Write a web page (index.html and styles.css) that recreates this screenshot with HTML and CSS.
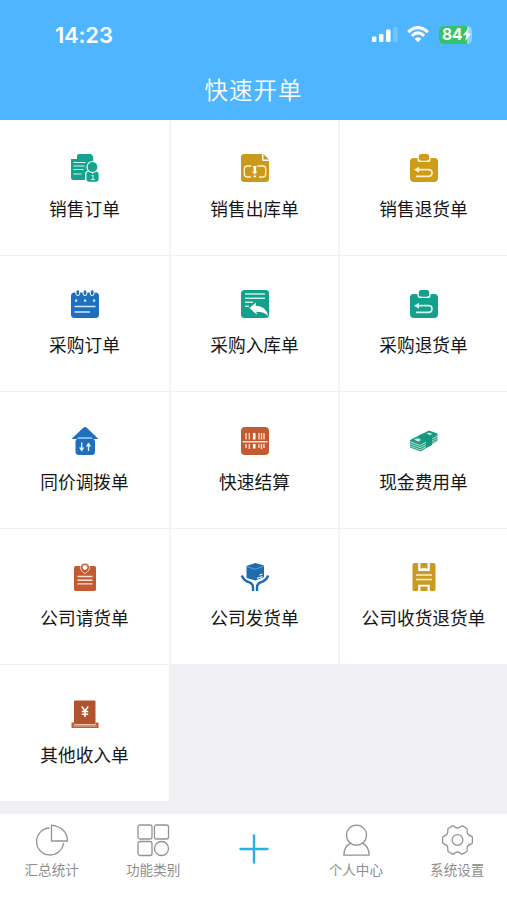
FILE: index.html
```html
<!DOCTYPE html>
<html lang="zh-CN">
<head>
<meta charset="utf-8">
<title>快速开单</title>
<link rel="stylesheet" href="styles.css">
</head>
<body>
<div class="app">
  <header class="header">
    <div class="status">
      <span class="time">14:23</span>
      <div class="status-icons">
        <svg class="signal" width="26" height="16" viewBox="0 0 26 16" fill="#fff"><rect x="0" y="9.5" width="4.4" height="5.500" rx="1.2"/><rect x="7" y="7" width="4.4" height="8" rx="1.2"/><rect x="14" y="2.5" width="4.6" height="12.500" rx="1.2"/><rect x="21.2" y="0" width="4.4" height="15" rx="1.2" opacity=".2"/></svg>
        <svg class="wifi" width="22" height="17" viewBox="0 0 22 17" fill="none" stroke="#fff" stroke-width="3"><path d="M1.2 6.2Q11-3 20.8 6.2"/><path d="M4.9 9.8Q11 4 17.1 9.8"/><path d="M7.6 12.7Q11 9.6 14.4 12.7L11 16.2Z" fill="#fff" stroke="none"/></svg>
        <div class="battery"><span>84</span><svg width="8" height="13" viewBox="0 0 8 13" fill="#fff"><path d="M5.7 0L0 7.300h3.300L2.300 13 8 5.400H4.600z"/></svg></div>
      </div>
    </div>
    <h1 class="title">快速开单</h1>
  </header>

  <main class="grid">
    <a class="cell">
      <svg class="icon" viewBox="0 0 28 28"><path fill="#15a38d" d="M8 0h12l2.200 2.500V21H14v5H2.500Q0 26 0 23.500V5h6V2Q6 0 8 0z"/><path stroke="#d9f5ef" stroke-width="1" d="M2.500 8.500h12M2.500 12h11M2.500 15.500h10M2.500 20h8"/><g fill="#15a38d" stroke="#fff" stroke-width="1.200"><rect x="14.800" y="17" width="13.400" height="11.300" rx="3"/><circle cx="21.500" cy="13" r="5.500"/></g><path fill="none" stroke="#b5e8dd" stroke-width="1.200" d="M20.500 21.500h1.500v4M20 25.500h4M21 19.500h1"/></svg>
      <span>销售订单</span>
    </a>
    <a class="cell">
      <svg class="icon" viewBox="0 0 28 28"><path fill="#c99a1c" d="M3 0h18v5.500Q21 7 22.500 7H28v18q0 3-3 3H3q-3 0-3-3V3q0-3 3-3zM22.500 0L28 5.500h-5.500z"/><path fill="none" stroke="#fff4c9" stroke-width="1.300" d="M10.500 12H6.500Q3.300 12 3.300 15v5q0 3 3.200 3h3.500M16.500 12h5q3.200 0 3.200 3v5q0 3-3.200 3h-3.500"/><path fill="#fff" d="M12 12h3.500l-.7 5.500h1.700l-2.800 3-2.700-3H13zM12.600 21.500H15v1.800h-2.400z"/></svg>
      <span>销售出库单</span>
    </a>
    <a class="cell">
      <svg class="icon" viewBox="0 0 28 28"><path fill="#cf9b18" d="M3.500 4h4v1.500Q7.500 8 10 8h8q2.500 0 2.500-2.500V4h4Q28 4 28 7.500V24q0 4-4 4H4q-4 0-4-4V7.500Q0 4 3.500 4z"/><rect x="8.800" y="0" width="10.400" height="6.700" rx="2.500" fill="#cf9b18"/><path fill="none" stroke="#fff1c8" stroke-width="1.700" d="M7 15.700h11.500q3.500 0 3.500 3.300t-3.500 3.300H6"/><path fill="#fff1c8" d="M4 15.700l5-3v6z"/></svg>
      <span>销售退货单</span>
    </a>

    <a class="cell">
      <svg class="icon" viewBox="0 0 28 28"><rect y="2.500" width="28" height="25.500" rx="3.500" fill="#1e70bf"/><g fill="#1e70bf" stroke="#fff" stroke-width="1"><rect x="5" y="-.2" width="3.600" height="5.800" rx="1.800"/><rect x="12.200" y="-.2" width="3.600" height="5.800" rx="1.800"/><rect x="19.400" y="-.2" width="3.600" height="5.800" rx="1.800"/></g><g fill="#d9ecff"><rect x="4" y="9.500" width="2.200" height="2.200"/><rect x="13" y="9.500" width="2.200" height="2.200"/><rect x="22" y="9.500" width="2.200" height="2.200"/></g><path stroke="#cfe6ff" stroke-width="1.500" d="M3.500 16.500h21M3.500 22h15.500"/></svg>
      <span>采购订单</span>
    </a>
    <a class="cell">
      <svg class="icon" viewBox="0 0 28 28"><rect width="28" height="28" rx="3.500" fill="#14a18b"/><path stroke="#c5eee4" stroke-width="1.500" d="M4 4h20M4 8.200h20M4 12.300h8M4 16.300h4"/><path fill="#fff" d="M8.500 18l6.500-5.500-.3 3.200q10.500.3 12.300 10.300-4-4.500-11.800-4.200l.8 3z"/></svg>
      <span>采购入库单</span>
    </a>
    <a class="cell">
      <svg class="icon" viewBox="0 0 28 28"><path fill="#14a18b" d="M3.500 4h4v1.500Q7.500 8 10 8h8q2.500 0 2.500-2.500V4h4Q28 4 28 7.500V24q0 4-4 4H4q-4 0-4-4V7.500Q0 4 3.500 4z"/><rect x="8.800" y="0" width="10.400" height="6.700" rx="2.500" fill="#14a18b"/><path fill="none" stroke="#d2f4ec" stroke-width="1.700" d="M7 15.700h11.500q3.500 0 3.500 3.300t-3.500 3.300H6"/><path fill="#d2f4ec" d="M4 15.700l5-3v6z"/></svg>
      <span>采购退货单</span>
    </a>

    <a class="cell">
      <svg class="icon" viewBox="0 0 28 28"><path fill="#1e70bf" d="M14 0q1 0 2 .9L27.500 12H22l-1.500-1.500h-13L6 12H.5L12 .9Q13 0 14 0z"/><rect x="4.500" y="11.500" width="19.500" height="16.500" rx="3.500" fill="#1e70bf"/><path fill="none" stroke="#e0f0ff" stroke-width="1.300" d="M10.700 15.500v8M17.500 24v-8"/><path fill="#e0f0ff" d="M8 20.500h5.400l-2.700 4zM14.800 19.500l2.700-4 2.700 4z"/></svg>
      <span>同价调拨单</span>
    </a>
    <a class="cell">
      <svg class="icon" viewBox="0 0 28 28"><rect width="28" height="28" rx="4" fill="#c25b32"/><path stroke="#ffe3d6" stroke-width="1.300" d="M5 6v6.500M8.300 6v6.500M18 6v6.500M20.500 6v6.500M23 6v6.500M5 17v4M8.300 17v5M18 17v4M20.500 17v5M23 17v4"/><path stroke="#fff" stroke-width="2.600" d="M13.200 6v6.500M13.200 17v4.500"/><path stroke="#ffdfcf" stroke-width="1.500" d="M1.500 14.800h25"/></svg>
      <span>快速结算</span>
    </a>
    <a class="cell">
      <svg class="icon" viewBox="0 0 28 28"><path fill="#1c9b82" d="M0 13L19 3.500l8.500 3v7.500L10.500 24.500 0 20.500z"/><path fill="none" stroke="#d5f1ea" stroke-width=".8" d="M0 14.500l10 4 17.500-9.500M0 16.700l10 4 17.500-9.500M0 18.900l10 4 17.500-9.500"/><path fill="#14977d" d="M7.500 9.500L13 6.500l9 4v7.500l-6 3v-7z"/><path fill="#d5f1ea" d="M4.500 12.800q1.500-1.800 4-1.300t1.500 2.300-5.500-1zM16.500 6.500q2.500-1.300 4.500-.2t-1 1.700z"/></svg>
      <span>现金费用单</span>
    </a>

    <a class="cell">
      <svg class="icon" viewBox="0 0 28 28"><rect x="3" y="3" width="22" height="25" rx="1.800" fill="#c25b32"/><path fill="#c25b32" stroke="#ffe8dd" stroke-width=".8" d="M14 .2a4.700 4.700 0 0 1 4.700 4.700Q18.500 8 14 10.800 9.500 8 9.300 4.900A4.700 4.700 0 0 1 14 .2z"/><circle cx="14" cy="4.500" r="2.400" fill="#fff"/><path stroke="#ffe1d3" stroke-width="1.400" d="M6.500 13.500h15M6.500 17.200h15M6.500 20.900h15"/></svg>
      <span>公司请货单</span>
    </a>
    <a class="cell">
      <svg class="icon" viewBox="0 0 28 28"><path fill="#1e6bb0" d="M5.500 3l9-3L23 2.500V14l-8.500 3.500L5.500 15z"/><path fill="none" stroke="#81b5e5" stroke-width=".7" d="M5.500 3.700l9 2.500L23 3"/><path stroke="#e0f1ff" stroke-width="1.300" d="M18.500 12.200l3-1.200M16 15.300l5.500-1.800"/><path fill="none" stroke="#1e6bb0" stroke-width="2.400" d="M.8 12.500Q3 18 8.500 19.300q3.500 1.500 3.500 5V28M27.200 12.500Q25 18 19.500 19.300q-3.500 1.500-3.500 5V28"/></svg>
      <span>公司发货单</span>
    </a>
    <a class="cell">
      <svg class="icon" viewBox="0 0 28 28"><path fill="#c99a24" d="M2.500 1.500Q2.500 0 4 0h4.500v8.500h11V0H24q1.500 0 1.500 1.500v25Q25.500 28 24 28h-4.500v-6.500h-11V28H4q-1.500 0-1.500-1.500zM7.500 8h13v14h-13zM10.500 0h7v5.500H16l-2-.8-2 .8h-1.500zM10.500 23.500h7V28h-7z"/><path fill="none" stroke="#fff" stroke-width="1.400" d="M9 0v7l3 .2 2-.9 2 .9 3-.2V0M9 28v-5.500h10V28"/><path stroke="#fff1cc" stroke-width="1.300" d="M6 12h16M6 16.500h16"/></svg>
      <span>公司收货退货单</span>
    </a>

    <a class="cell last">
      <svg class="icon" viewBox="0 0 28 28"><rect x="3" y=".5" width="21.500" height="23.500" rx="1" fill="#b3532e"/><path fill="#c25b32" d="M.5 22.500h3v1.700h21v-1.700h3V28H.5z"/><path stroke="#f6d8ca" stroke-width=".8" d="M3.500 24.500h21M2.500 26h23"/><path fill="none" stroke="#fff" stroke-width="1.500" d="M10.800 6.500l3.200 4.500 3.200-4.500M14 11v6M10.800 11.500h6.400M10.800 14.200h6.400"/></svg>
      <span>其他收入单</span>
    </a>
  </main>

  <nav class="tabs">
    <a class="tab">
      <svg class="tab-icon" viewBox="0 0 32 32"><path d="M13.500 4A13.500 13.500 0 1 0 27.500 19M15.500 1.200V17h16Q31 3.500 15.500 1.200z"/></svg>
      <span>汇总统计</span>
    </a>
    <a class="tab">
      <svg class="tab-icon" viewBox="0 0 32 32"><rect x="1" y="1" width="14" height="14" rx="2"/><rect x="17.500" y="1" width="14" height="14" rx="2"/><rect x="1" y="17.500" width="14" height="14" rx="2"/><circle cx="24.500" cy="24.500" r="7"/></svg>
      <span>功能类别</span>
    </a>
    <a class="tab add">
      <svg width="30" height="30" viewBox="0 0 30 30"><path d="M15 1.500v27M1.500 15h27"/></svg>
    </a>
    <a class="tab">
      <svg class="tab-icon" viewBox="0 0 32 32"><circle cx="16.500" cy="11.200" r="10"/><path d="M10.500 19.200Q4 22.500 3.800 31.200h25.400Q29 22.500 22.500 19.200"/></svg>
      <span>个人中心</span>
    </a>
    <a class="tab">
      <svg class="tab-icon" viewBox="0 0 32 32"><path d="M11.500 1.900Q12.500 1.600 13.200 2.500Q16.500 5.500 19.800 2.500Q20.500 1.600 21.500 1.900L25.500 4.200Q26.500 5 26.200 6Q25.500 10.800 30 12Q31.200 12.200 31.400 13.500V18.500Q31.200 19.800 30 20Q25.500 21.200 26.200 26Q26.500 27 25.500 27.800L21.500 30.100Q20.500 30.400 19.800 29.500Q16.500 26.500 13.200 29.500Q12.500 30.400 11.500 30.100L7.500 27.800Q6.500 27 6.800 26Q7.500 21.200 3 20Q1.800 19.800 1.600 18.500V13.500Q1.800 12.200 3 12Q7.500 10.800 6.800 6Q6.500 5 7.500 4.200Z"/><circle cx="16.500" cy="16" r="5.400"/></svg>
      <span>系统设置</span>
    </a>
  </nav>
</div>
</body>
</html>
```

FILE: styles.css
```css
* { box-sizing: border-box; }

body {
  margin: 0;
  background: #efeff4;
  font-family: "Noto Sans CJK SC", sans-serif;
}

.app {
  width: 507px;
  height: 900px;
  display: flex;
  flex-direction: column;
  overflow: hidden;
}

.header {
  flex: none;
  height: 119.5px;
  background: #50b5ff;
  color: #fff;
}

.status {
  height: 69px;
  padding: 0 35px 0 55px;
  display: flex;
  align-items: center;
  justify-content: space-between;
}

.time {
  font: 600 22px/28px Inter, sans-serif;
  letter-spacing: -0.2px;
}

.status-icons {
  display: flex;
  align-items: center;
}

.signal { margin-right: 9px; }
.wifi { margin-right: 10px; }

.battery {
  width: 33px;
  height: 18px;
  border-radius: 5px;
  padding-left: 3px;
  display: flex;
  align-items: center;
  background: linear-gradient(90deg, #34c466 28px, #96d3fa 28px);
  font: 700 15.5px/18px Inter, sans-serif;
}

.title {
  margin: 0;
  text-align: center;
  font-size: 23.5px;
  line-height: 40px;
  font-weight: 350;
  letter-spacing: 1px;
}

.grid {
  flex: none;
  display: grid;
  grid-template-columns: 171px 169px 167px;
  grid-auto-rows: 136.4px;
}

.cell {
  display: flex;
  flex-direction: column;
  align-items: center;
  padding-top: 34.5px;
  background: #fff;
  border-bottom: 1px solid #f1f1f4;
  border-right: 2px solid #f3f3f6;
  color: #161616;
  font-size: 17.7px;
  line-height: 26px;
  white-space: nowrap;
}

.cell:nth-child(3n) { border-right: 0; }
.cell.last { width: 169px; border: 0; }

.icon {
  flex: none;
  width: 28px;
  height: 28px;
  margin-bottom: 13px;
  overflow: visible;
}

.tabs {
  flex: none;
  height: 86px;
  margin-top: auto;
  padding-left: 1px;
  display: grid;
  grid-template-columns: repeat(5, 101.4px);
  background: #fff;
}

.tab {
  display: flex;
  flex-direction: column;
  align-items: center;
  padding-top: 9.5px;
  color: #8e8e8e;
  font-size: 13.6px;
  line-height: 20px;
}

.tab-icon {
  width: 32px;
  height: 32px;
  margin-bottom: 3.5px;
  overflow: visible;
  fill: none;
  stroke: #939393;
  stroke-width: 1.3;
  stroke-linejoin: round;
}

.tab.add { padding-top: 20px; }

.add svg {
  fill: none;
  stroke: #27b0f0;
  stroke-width: 2.4;
  stroke-linecap: round;
}
```
